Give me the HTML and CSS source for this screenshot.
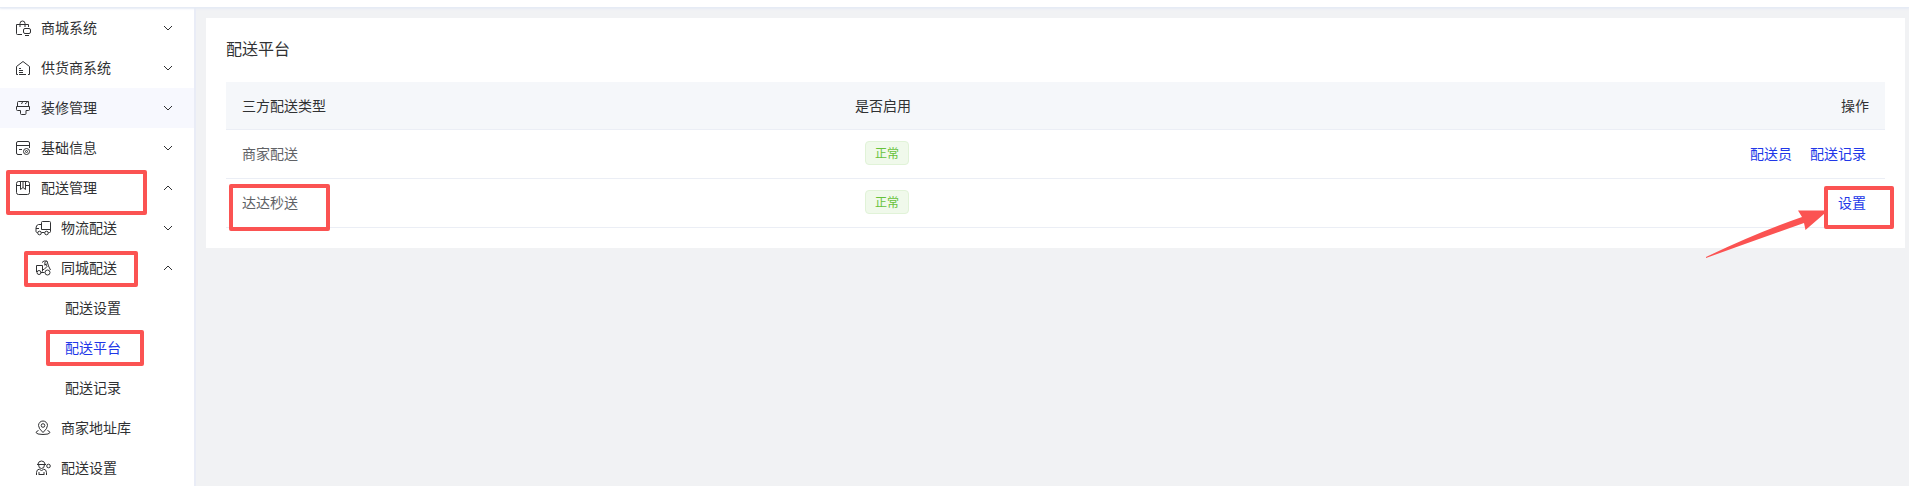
FILE: index.html
```html
<!DOCTYPE html>
<html lang="zh-CN">
<head>
  <meta charset="UTF-8">
  <meta name="viewport" content="width=device-width, initial-scale=1.0">
  <title>配送平台</title>
  <link rel="stylesheet" href="styles.css">
</head>
<body>
  <header class="topbar"></header>
  <div class="layout">
    <nav class="sidebar">
      <button class="menu-item">
        <svg class="icon" viewBox="0 0 16 16"><path d="M5 7V3.500a2.500 2.500 0 0 1 5 0V7M7 14.500H2.500q-1 0-1-1v-9h12V7"/><rect x="8.500" y="8.500" width="7" height="5" rx="1.500"/><path d="M10 15.500h4"/></svg>
        <span>商城系统</span>
        <svg class="arrow" viewBox="0 0 10 10"><path d="M1 3l4 4 4-4"/></svg>
      </button>
      <button class="menu-item">
        <svg class="icon" viewBox="0 0 16 16"><path d="M1.500 14.500V6.500L8 1.500l6.500 5v8H13M1.500 14.500H3M4 8.500h2M4 10.500h4M4 12.500h4M4 14.500h7"/></svg>
        <span>供货商系统</span>
        <svg class="arrow" viewBox="0 0 10 10"><path d="M1 3l4 4 4-4"/></svg>
      </button>
      <button class="menu-item hover">
        <svg class="icon" viewBox="0 0 16 16"><path d="M2.500 6V2.500q0-1 1-1h10V6M6 3.500l2-1M10 4l2.500-2M1.500 6.500h13v3q0 1-1 1H11v3q0 1-1 1H6.500q-1 0-1-1v-3h-3q-1 0-1-1z"/></svg>
        <span>装修管理</span>
        <svg class="arrow" viewBox="0 0 10 10"><path d="M1 3l4 4 4-4"/></svg>
      </button>
      <button class="menu-item">
        <svg class="icon" viewBox="0 0 16 16"><path d="M7 14.500H3q-1.500 0-1.500-1.500V3Q1.500 1.500 3 1.500h10q1.500 0 1.500 1.500v5M1.500 5.500h13M4 9.500h3"/><circle cx="11.500" cy="11.500" r="3"/><circle cx="11.500" cy="11.500" r="1"/></svg>
        <span>基础信息</span>
        <svg class="arrow" viewBox="0 0 10 10"><path d="M1 3l4 4 4-4"/></svg>
      </button>
      <button class="menu-item">
        <svg class="icon" viewBox="0 0 16 16"><rect x="1.500" y="1.500" width="13" height="13" rx="2"/><path d="M1.500 5.500h4M10.500 5.500h4M5.500 1.500v8L8 7.500l2.500 2v-8M8 1.500v6"/></svg>
        <span>配送管理</span>
        <svg class="arrow" viewBox="0 0 10 10"><path d="M1 7l4-4 4 4"/></svg>
      </button>
      <button class="menu-item level-2">
        <svg class="icon" viewBox="0 0 16 16"><path d="M6.500 9.500v-7q0-1 1-1h7q1 0 1 1v9q0 1-1 1h-1M6.500 4.500h-3Q1 5 1 8v3.500q0 1 1.500 1M1 8.500h3M6.500 9.500h9M6.500 12.500h3"/><circle cx="4.500" cy="13" r="1.800"/><circle cx="11.500" cy="13" r="1.800"/></svg>
        <span>物流配送</span>
        <svg class="arrow" viewBox="0 0 10 10"><path d="M1 3l4 4 4-4"/></svg>
      </button>
      <button class="menu-item level-2">
        <svg class="icon" viewBox="0 0 16 16"><path d="M1.500 11.500v-6h6v6M1 11.500h1.500M5.500 12.500h4M7.500 9.500H9l3-3-2.500-3.500M7 2.500l2-1.500h3l1.500 5 2 4M9.500 3l2-2M9 5l3-1"/><circle cx="4" cy="12.500" r="2"/><circle cx="12.500" cy="12.500" r="2.500"/></svg>
        <span>同城配送</span>
        <svg class="arrow" viewBox="0 0 10 10"><path d="M1 7l4-4 4 4"/></svg>
      </button>
      <a class="menu-item level-3" href="#"><span>配送设置</span></a>
      <a class="menu-item level-3 active" href="#"><span>配送平台</span></a>
      <a class="menu-item level-3" href="#"><span>配送记录</span></a>
      <a class="menu-item level-2" href="#">
        <svg class="icon" viewBox="0 0 16 16"><path d="M8 12.500Q3.500 8.500 3.500 5.500a4.500 4.500 0 0 1 9 0Q12.500 8.500 8 12.500zM3.500 10.500Q1 11.500 1 12.500 1.500 14.500 8 14.500t7-2q0-1-2.500-2"/><circle cx="8" cy="5.500" r="1.800"/></svg>
        <span>商家地址库</span>
      </a>
      <a class="menu-item level-2" href="#">
        <svg class="icon" viewBox="0 0 16 16"><path d="M3 4Q3.500 1 6.500 1T10 4M2 4.500h9M3.500 4.500q0 4 3 4t3-4M1.500 15v-2.500q0-3 3-3.500l2 2 2-2q3 .500 3 3.500V15M4 15v-3M9 15v-3M4 14.500h5"/><circle cx="13.500" cy="6" r="1.800"/></svg>
        <span>配送设置</span>
      </a>
    </nav>

    <main class="content">
      <section class="card">
        <h1 class="card-title">配送平台</h1>
        <table class="table">
          <thead>
            <tr>
              <th class="col-type">三方配送类型</th>
              <th class="col-status">是否启用</th>
              <th class="col-action">操作</th>
            </tr>
          </thead>
          <tbody>
            <tr>
              <td>商家配送</td>
              <td class="col-status"><span class="tag">正常</span></td>
              <td class="col-action"><a class="link" href="#">配送员</a><a class="link" href="#">配送记录</a></td>
            </tr>
            <tr>
              <td>达达秒送</td>
              <td class="col-status"><span class="tag">正常</span></td>
              <td class="col-action"><a class="link" href="#">设置</a></td>
            </tr>
          </tbody>
        </table>
      </section>
    </main>
  </div>

  <!-- guide marks -->
  <div class="mark mark-manage"></div>
  <div class="mark mark-city"></div>
  <div class="mark mark-platform"></div>
  <div class="mark mark-dada"></div>
  <div class="mark mark-setting"></div>
  <svg class="pointer" viewBox="0 0 122 50"><path d="M0 49Q50 25 96 9L92 2.500h30L99.500 22 98 15Q50 32 0 50z"/></svg>
</body>
</html>
```

FILE: styles.css
```css
* {
  box-sizing: border-box;
}
body {
  position: relative;
  display: flex;
  flex-direction: column;
  height: 100vh;
  margin: 0;
  overflow: hidden;
  font-family: "Noto Sans CJK SC", sans-serif;
  font-size: 14px;
  line-height: 20px;
  color: #303133;
  background-color: #f1f2f4;
}
.topbar {
  flex: none;
  height: 8px;
  background-color: #fff;
  border-bottom: 1px solid #e6ebf5;
  box-shadow: 0 1px 2px #e6ebf5;
  z-index: 1;
}
.layout {
  display: flex;
  flex: 1;
  min-height: 0;
}

/* sidebar */
.sidebar {
  flex: none;
  width: 196px;
  overflow: hidden;
  background-color: #fff;
  border-right: 2px solid #e9ecf6;
}
.menu-item {
  display: flex;
  align-items: center;
  gap: 10px;
  width: 100%;
  height: 40px;
  padding: 0 21px 0 15px;
  border: none;
  background: none;
  font: inherit;
  color: #303133;
  text-decoration: none;
  cursor: pointer;
}
.menu-item span {
  padding-bottom: 2px;
}
.menu-item.hover {
  background-color: #f7f8fe;
}
.menu-item.level-2 {
  padding-left: 35px;
}
.menu-item.level-3 {
  padding-left: 65px;
}
.menu-item.active {
  color: #2137e8;
}
.icon,
.arrow {
  fill: none;
  stroke: #303133;
}
.icon {
  width: 16px;
  height: 16px;
}
.arrow {
  width: 10px;
  height: 10px;
  margin-left: auto;
}

/* content */
.content {
  flex: 1;
  padding: 10px 4px 10px 10px;
}
.card {
  padding: 18px 20px 20px;
  background-color: #fff;
}
.card-title {
  margin: 0 0 22px;
  font-size: 16px;
  font-weight: 400;
  line-height: 24px;
}
.table {
  width: 100%;
  table-layout: fixed;
  border-collapse: separate;
  border-spacing: 0;
}
.table th,
.table td {
  height: 50px;
  padding: 0 16px 2px;
  border-bottom: 1px solid #ebeef5;
  text-align: left;
}
.table th {
  height: 48px;
  font-weight: 400;
  background-color: #f5f7fa;
}
.table td {
  height: 49px;
  color: #606266;
}
.table .col-type {
  width: 30%;
}
.table .col-status {
  width: 19.2%;
  text-align: center;
}
.table .col-action {
  text-align: right;
}
.tag {
  display: inline-block;
  height: 24px;
  margin-left: 8px;
  padding: 0 9px;
  border: 1px solid #e1f3d8;
  border-radius: 4px;
  font-size: 12px;
  line-height: 22px;
  color: #67c23a;
  background-color: #f0f9eb;
}
.link {
  margin: 0 3px 0 15px;
  color: #2137e8;
  text-decoration: none;
}

/* guide marks */
.mark {
  position: absolute;
  z-index: 2;
  border: 4px solid #fb5352;
  border-radius: 2px;
  pointer-events: none;
}
.mark-manage {
  top: 170px;
  left: 6px;
  width: 141px;
  height: 45px;
}
.mark-city {
  top: 251px;
  left: 24px;
  width: 114px;
  height: 36px;
}
.mark-platform {
  top: 330px;
  left: 46px;
  width: 98px;
  height: 36px;
}
.mark-dada {
  top: 184px;
  left: 229px;
  width: 101px;
  height: 47px;
}
.mark-setting {
  top: 186px;
  right: 15px;
  width: 70px;
  height: 43px;
}
.pointer {
  position: absolute;
  z-index: 2;
  top: 208px;
  right: 81px;
  width: 122px;
  height: 50px;
  fill: #fb5352;
  pointer-events: none;
}
```
